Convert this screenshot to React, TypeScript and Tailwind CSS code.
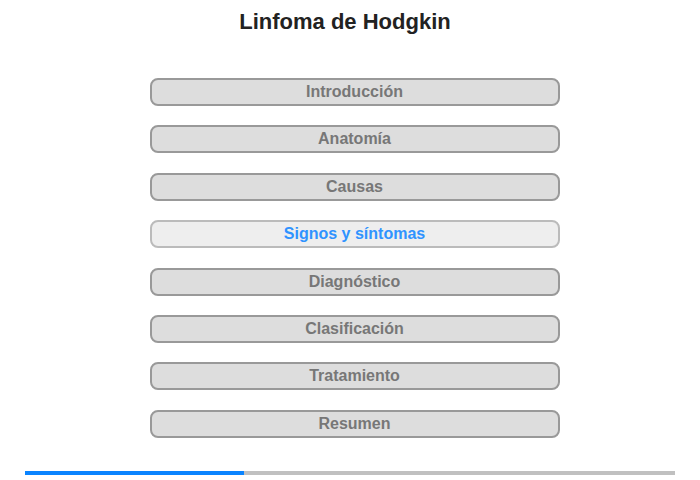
const SECTIONS = [
  "Introducción",
  "Anatomía",
  "Causas",
  "Signos y síntomas",
  "Diagnóstico",
  "Clasificación",
  "Tratamiento",
  "Resumen",
];

const ACTIVE = 3;

export default function App() {
  return (
    <div className="relative h-[480px] w-[700px] bg-white font-['Liberation_Sans',Arial,sans-serif]">
      <h1 className="pr-[10px] pt-[9px] text-center text-[22px] font-bold leading-[26px] text-[#222]">
        Linfoma de Hodgkin
      </h1>

      {/* Menu */}
      <nav className="ml-[9px] mt-[43px] flex flex-col items-center gap-[19.4px]">
        {SECTIONS.map((s, i) => (
          <button
            key={s}
            className={
              i === ACTIVE
                ? "flex h-[28px] w-[410px] items-center justify-center rounded-[8px] border-2 border-[#bbbbbb] bg-[#eeeeee] text-[16px] font-bold text-[#2f93ff]"
                : "flex h-[28px] w-[410px] items-center justify-center rounded-[8px] border-2 border-[#999999] bg-[#dddddd] text-[16px] font-bold text-[#777777]"
            }
          >
            {s}
          </button>
        ))}
      </nav>

      {/* Progress */}
      <div className="absolute bottom-[5px] left-[25px] flex h-[4px] w-[650px] bg-[#c0c0c0]">
        <div className="h-full w-[219px] bg-[#0a84ff]" />
      </div>
    </div>
  );
}
